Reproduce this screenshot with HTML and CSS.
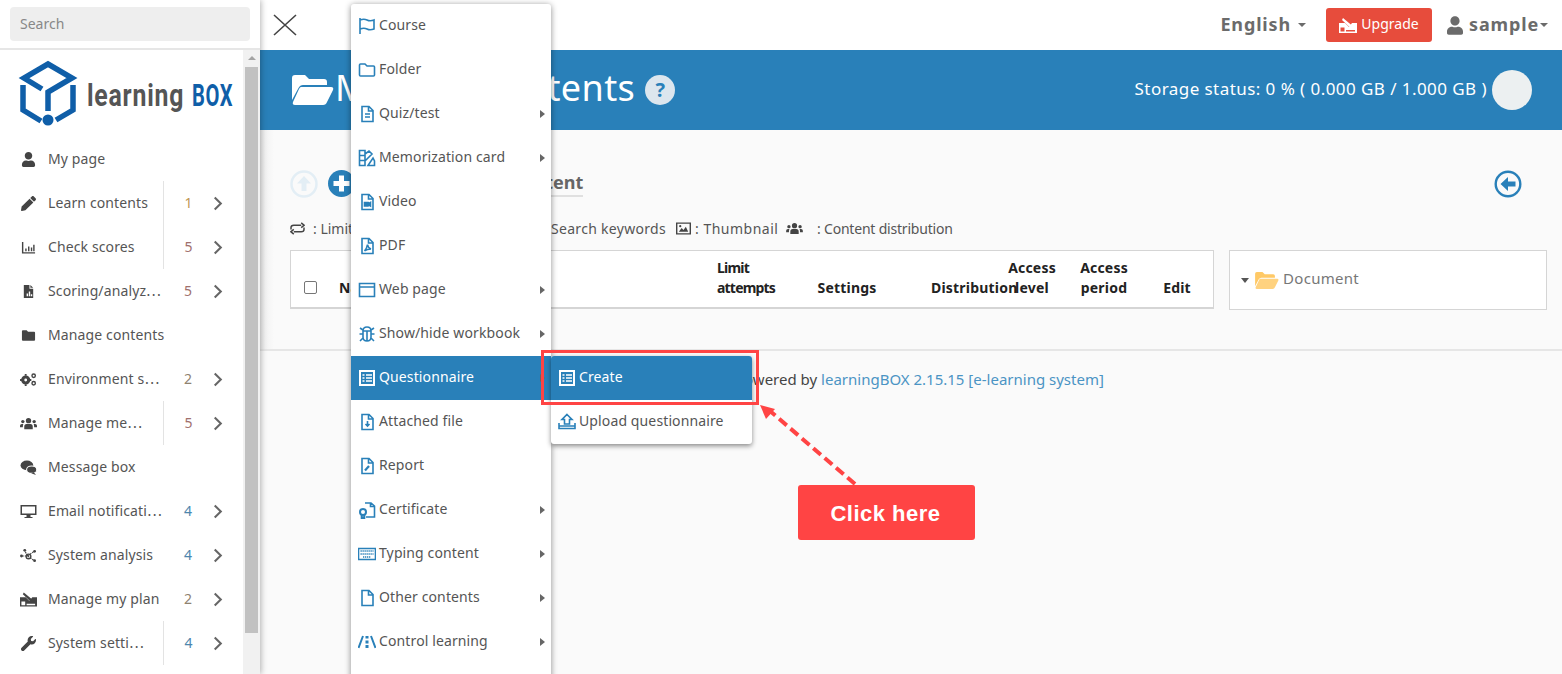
FILE: index.html
```html
<!DOCTYPE html>
<html lang="en">

<head>
    <meta charset="UTF-8">
    <meta name="viewport" content="width=device-width, initial-scale=1.0">
    <title>learningBOX</title>
    <link rel="stylesheet" href="styles.css">
</head>

<body>
    <div class="page">
        <!-- sidebar -->
        <div class="sidebar">
            <div class="searchBar"><div class="searchBox">Search</div></div>
            <div class="sideScroll">
                <div class="sideBody">
                    <div class="logo">
                        <svg width="220" height="70" viewBox="15 60 220 70">
                            <g fill="none" stroke="#0f5ea8" stroke-width="5.500">
                                <path d="M42 89 L24 78 L48 64 L72 78 L48 92 V111"/>
                                <path d="M23 85 V110 L41 121"/>
                                <path d="M73 85 V110 L56 120"/>
                            </g>
                            <circle cx="48" cy="120" r="5.500" fill="#0f5ea8"/>
                            <text transform="translate(87 106) scale(.8 1)" class="logoText" fill="#555">learning</text>
                            <text transform="translate(192 106) scale(.65 1)" class="logoText" fill="#0f5ea8">BOX</text>
                        </svg>
                    </div>
                    <div class="navItem">
                        <svg class="navIcon" viewBox="0 0 448 512"><path d="M224 256c70.700 0 128-57.300 128-128S294.700 0 224 0 96 57.300 96 128s57.300 128 128 128zm89.600 32h-16.700c-22.200 10.200-46.900 16-72.900 16s-50.600-5.800-72.900-16h-16.700C60.200 288 0 348.200 0 422.400V464c0 26.500 21.500 48 48 48h352c26.500 0 48-21.500 48-48v-41.600c0-74.200-60.200-134.400-134.400-134.400z"/></svg>
                        <span class="navLabel">My page</span>
                    </div>
                    <div class="navItem">
                        <svg class="navIcon" viewBox="0 0 512 512"><path d="M497.900 142.100l-46.100 46.100c-4.700 4.700-12.300 4.700-17 0l-111-111c-4.700-4.700-4.700-12.300 0-17l46.100-46.100c18.700-18.700 49.100-18.700 67.900 0l60.100 60.100c18.800 18.700 18.800 49.100 0 67.900zM284.200 99.800L21.600 362.400.4 483.900c-2.900 16.400 11.400 30.600 27.800 27.800l121.500-21.300 262.600-262.600c4.700-4.700 4.700-12.300 0-17l-111-111c-4.800-4.700-12.400-4.700-17.100 0z"/></svg>
                        <span class="navLabel">Learn contents</span>
                        <span class="navNum sep tan">1</span>
                        <svg class="chev" viewBox="0 0 10 16"><path d="M1.500 1.500 L8 8 L1.500 14.500"/></svg>
                    </div>
                    <div class="navItem">
                        <svg class="navIcon" viewBox="0 0 16 16"><path d="M1 2h1.500v11H15v1.500H1zM4.500 9h1.500v3H4.500zM7.500 7h1.500v5H7.500zM10.500 8h1.500v4h-1.500zM13 5h1.500v7H13z"/></svg>
                        <span class="navLabel">Check scores</span>
                        <span class="navNum sep red">5</span>
                        <svg class="chev" viewBox="0 0 10 16"><path d="M1.500 1.500 L8 8 L1.500 14.500"/></svg>
                    </div>
                    <div class="navItem">
                        <svg class="navIcon" viewBox="0 0 16 16"><path d="M3 1h6v4h4v10H3zM10 1l3 3h-3z M6 13h1.500v-3H6z M8.300 13h1.500V8H8.300z M10.500 13H12v-2h-1.500z" fill-rule="evenodd"/></svg>
                        <span class="navLabel">Scoring/analyz⋯</span>
                        <span class="navNum red">5</span>
                        <svg class="chev" viewBox="0 0 10 16"><path d="M1.500 1.500 L8 8 L1.500 14.500"/></svg>
                    </div>
                    <div class="navItem">
                        <svg class="navIcon" viewBox="0 0 16 16"><path d="M1 3.500 Q1 2.500 2 2.500 H6 L7.500 4 H14 Q15 4 15 5 V12.500 Q15 13.500 14 13.500 H2 Q1 13.500 1 12.500z"/></svg>
                        <span class="navLabel">Manage contents</span>
                    </div>
                    <div class="navItem">
                        <svg class="navIcon" viewBox="0 0 18 16"><circle cx="6" cy="8.500" r="3.200" fill="none" stroke="#444" stroke-width="3.400"/><path d="M5 2h2v2H5zM5 13h2v2H5zM0 7.500h2v2H0zM10 7.500h2v2h-2z"/><circle cx="14.500" cy="4" r="1.800" fill="none" stroke="#444" stroke-width="1.500"/><circle cx="14.500" cy="12" r="1.800" fill="none" stroke="#444" stroke-width="1.500"/></svg>
                        <span class="navLabel">Environment s⋯</span>
                        <span class="navNum brown">2</span>
                        <svg class="chev" viewBox="0 0 10 16"><path d="M1.500 1.500 L8 8 L1.500 14.500"/></svg>
                    </div>
                    <div class="navItem">
                        <svg class="navIcon" viewBox="0 0 18 14"><circle cx="9" cy="4" r="2.800"/><circle cx="3" cy="5" r="1.800"/><circle cx="15" cy="5" r="1.800"/><path d="M4.500 13 V10.500 Q4.500 7.500 7 7.500 H11 Q13.500 7.500 13.500 10.500 V13z M0 11 V9.500 Q0 7.500 2 7.500 H3.500 Q3 9 3 11z M18 11 V9.500 Q18 7.500 16 7.500 H14.500 Q15 9 15 11z"/></svg>
                        <span class="navLabel">Manage me⋯</span>
                        <span class="navNum sep red">5</span>
                        <svg class="chev" viewBox="0 0 10 16"><path d="M1.500 1.500 L8 8 L1.500 14.500"/></svg>
                    </div>
                    <div class="navItem">
                        <svg class="navIcon" viewBox="0 0 16 14"><ellipse cx="6.500" cy="5" rx="6" ry="4.500"/><ellipse cx="11" cy="9" rx="4.800" ry="3.500" stroke="#fff"/><path d="M13 11.500 L15 14 L10.500 12.500z"/></svg>
                        <span class="navLabel">Message box</span>
                    </div>
                    <div class="navItem">
                        <svg class="navIcon" viewBox="0 0 16 15"><path d="M0 1h16v10H10v2h2v1H4v-1h2v-2H0zM1.500 2.500v7h13v-7z" fill-rule="evenodd"/></svg>
                        <span class="navLabel">Email notificati⋯</span>
                        <span class="navNum blue">4</span>
                        <svg class="chev" viewBox="0 0 10 16"><path d="M1.500 1.500 L8 8 L1.500 14.500"/></svg>
                    </div>
                    <div class="navItem">
                        <svg class="navIcon" viewBox="0 0 18 16"><path d="M2 8.500 H7 M8 8.500 L5 3 M8 8.500 L15 3.500 M8 8.500 L15 13.500" stroke="#444" stroke-width="1.200" stroke-dasharray="2 1"/><circle cx="1.500" cy="8.500" r="1.500"/><circle cx="5" cy="2.500" r="1.500"/><circle cx="9" cy="9" r="2.500" fill="none" stroke="#444" stroke-width="1.500"/><circle cx="15.500" cy="3.500" r="1.500"/><circle cx="15.500" cy="13.500" r="1.500"/></svg>
                        <span class="navLabel">System analysis</span>
                        <span class="navNum blue">4</span>
                        <svg class="chev" viewBox="0 0 10 16"><path d="M1.500 1.500 L8 8 L1.500 14.500"/></svg>
                    </div>
                    <div class="navItem">
                        <svg class="navIcon" viewBox="0 0 18 15"><path d="M0 5h6l4 4 3-4h5v10H0zM1.500 9.500v4h4v-4zM7 12v1.500h9V12z" fill-rule="evenodd"/><path d="M4 0 L13 7.500 L10.500 9 L3 2z"/></svg>
                        <span class="navLabel">Manage my plan</span>
                        <span class="navNum brown">2</span>
                        <svg class="chev" viewBox="0 0 10 16"><path d="M1.500 1.500 L8 8 L1.500 14.500"/></svg>
                    </div>
                    <div class="navItem">
                        <svg class="navIcon" viewBox="0 0 512 512"><path d="M507.700 109.100c-2.200-9-13.500-12.100-20.100-5.500l-74.400 74.400-67.900-11.300-11.300-67.900 74.400-74.400c6.600-6.600 3.400-17.900-5.700-20.200-47.400-11.700-99.500.9-136.400 37.900-39.500 39.500-50.500 97-34.100 147.100L18.700 402.800c-25 25-25 65.500 0 90.500 25 25 65.500 25 90.500 0l213.200-213.200c50.100 16.700 107.500 5.700 147.400-34.200 37.100-37.100 49.700-89.300 37.900-136.800z"/></svg>
                        <span class="navLabel">System setti⋯</span>
                        <span class="navNum sep blue">4</span>
                        <svg class="chev" viewBox="0 0 10 16"><path d="M1.500 1.500 L8 8 L1.500 14.500"/></svg>
                    </div>
                </div>
                <div class="scrollTrack">
                    <div class="scrollUp"></div>
                    <div class="scrollThumb"></div>
                </div>
            </div>
        </div>

        <!-- main column -->
        <div class="main">
            <div class="topBar">
                <svg class="closeIcon" viewBox="0 0 24 22"><path d="M1 1 L23 21 M23 1 L1 21"/></svg>
                <div class="topRight">
                    <span class="topLink">English</span><span class="caret lang"></span>
                    <div class="upgradeBtn">
                        <svg width="18" height="15" viewBox="0 0 18 15"><path d="M0 5h6l4 4 3-4h5v10H0zM1.500 9.500v4h4v-4zM7 12v1.500h9V12z" fill="#fff" fill-rule="evenodd"/><path d="M4 0 L13 7.500 L10.500 9 L3 2z" fill="#fff"/></svg>
                        <span class="btnText">Upgrade</span>
                    </div>
                    <svg class="userIcon" viewBox="0 0 448 512"><path d="M224 256c70.700 0 128-57.300 128-128S294.700 0 224 0 96 57.300 96 128s57.300 128 128 128zm89.600 32h-16.700c-22.200 10.200-46.900 16-72.900 16s-50.600-5.800-72.900-16h-16.700C60.200 288 0 348.200 0 422.400V464c0 26.500 21.500 48 48 48h352c26.500 0 48-21.500 48-48v-41.600c0-74.200-60.200-134.400-134.400-134.400z"/></svg>
                    <span class="topLink">sample</span><span class="caret"></span>
                </div>
            </div>

            <div class="titleBar">
                <svg class="titleFolder" viewBox="0 0 42 30"><path d="M0 3 Q0 0 3 0 H13 L17 4 H32 Q35 4 35 7 V10 H11 Q8 10 6.500 13 L0 25z"/><path d="M9 12 H39 Q42 12 41 15 L35 27 Q34 30 31 30 H3 Q0 30 1 27 L7 14 Q8 12 9 12z"/></svg>
                <h1>Manage contents</h1>
                <span class="helpBadge">?</span>
                <span class="storage">Storage status: 0 % ( 0.000 GB / 1.000 GB )</span>
                <span class="storageCircle"></span>
            </div>

            <div class="content">
                <div class="toolRow">
                    <svg class="upBtn" viewBox="0 0 28 28"><circle cx="14" cy="14" r="12.500" fill="none" stroke="#e3eef5" stroke-width="2.500"/><path d="M14 6 L21 13.500 H16.500 V21 H11.500 V13.500 H7z" fill="#e3eef5"/></svg>
                    <svg class="plusBtn" viewBox="0 0 27 27"><circle cx="13.500" cy="13.500" r="13.500" fill="#2980b9"/><path d="M11 5.500h5V11h5.500v5H16v5.500h-5V16H5.500v-5H11z" fill="#fff"/></svg>
                    <span class="addTab">Add content</span>
                    <svg class="backBtn" viewBox="0 0 28 28"><circle cx="14" cy="14" r="12.300" fill="none" stroke="#2980b9" stroke-width="2.400"/><path d="M6.500 14 L14 7 V11.500 H21.500 V16.500 H14 V21z" fill="#2980b9"/></svg>
                </div>

                <div class="legend">
                    <svg class="legIcon" viewBox="0 0 16 14"><path d="M1 8 V6 Q1 3.500 4 3.500 H12 M12 1 L15 3.500 L12 6 M15 6 V8 Q15 10.500 12 10.500 H4 M4 8 L1 10.500 L4 13" fill="none" stroke="#444" stroke-width="1.600"/></svg>
                    <span class="legFirst">: Limit attempts</span>
                    <span class="legSecond">: Settings</span>
                    <span class="legThird">: Search keywords</span>
                    <svg class="legIcon thumb" viewBox="0 0 16 13"><path d="M0 0h16v13H0zM1.500 1.500v10h13v-10z" fill="#444" fill-rule="evenodd"/><path d="M3 10 L6 6 L8 8 L10.500 4.500 L13 10z" fill="#444"/><circle cx="4.500" cy="4" r="1.200" fill="#444"/></svg>
                    <span class="legThumb">: Thumbnail</span>
                    <svg class="legIcon people" viewBox="0 0 18 14" fill="#444"><circle cx="9" cy="4" r="2.800"/><circle cx="3" cy="5" r="1.800"/><circle cx="15" cy="5" r="1.800"/><path d="M4.500 13 V10.500 Q4.500 7.500 7 7.500 H11 Q13.500 7.500 13.500 10.500 V13z M0 11 V9.500 Q0 7.500 2 7.500 H3.500 Q3 9 3 11z M18 11 V9.500 Q18 7.500 16 7.500 H14.500 Q15 9 15 11z"/></svg>
                    <span class="legLast">: Content distribution</span>
                </div>

                <div class="tableRow">
                    <div class="listHead">
                        <span class="checkBox"></span>
                        <span class="colName">Name</span>
                        <span class="colLimit">Limit<br>attempts</span>
                        <span class="colSettings">Settings</span>
                        <span class="colDist">Distribution</span>
                        <span class="colLevel">Access<br>level</span>
                        <span class="colPeriod">Access<br>period</span>
                        <span class="colEdit">Edit</span>
                    </div>
                    <div class="treePanel">
                        <span class="treeCaret"></span>
                        <svg class="treeFolder" viewBox="0 0 42 30"><path d="M0 3 Q0 0 3 0 H13 L17 4 H32 Q35 4 35 7 V10 H11 Q8 10 6.500 13 L0 25z" fill="#ffc966"/><path d="M9 12 H39 Q42 12 41 15 L35 27 Q34 30 31 30 H3 Q0 30 1 27 L7 14 Q8 12 9 12z" fill="#ffd27f"/></svg>
                        <span class="treeText">Document</span>
                    </div>
                </div>
            </div>

            <div class="footer">Powered by <span class="footLink">learningBOX 2.15.15 [e-learning system]</span></div>
        </div>
    </div>

    <!-- dropdown menu -->
    <div class="menu">
        <div class="menuItem">
            <svg class="menuIcon" viewBox="0 0 18 18"><path d="M2 1 V17 M2 3 Q6 1.500 9 3 T16 3 V12 Q12 13.500 9 12 T2 12"/></svg>
            <span>Course</span>
        </div>
        <div class="menuItem">
            <svg class="menuIcon" viewBox="0 0 18 18"><path d="M1.500 4 Q1.500 3 2.500 3 H7 L9 5 H15.500 Q16.500 5 16.500 6 V14 Q16.500 15 15.500 15 H2.500 Q1.500 15 1.500 14z"/></svg>
            <span>Folder</span>
        </div>
        <div class="menuItem more">
            <svg class="menuIcon" viewBox="0 0 18 18"><path d="M4 1.500 H11 L15 5.500 V16.500 H4z M7 9 H12 M7 12 H12 M10.500 1.500 V6 H15"/></svg>
            <span>Quiz/test</span>
        </div>
        <div class="menuItem more">
            <svg class="menuIcon" viewBox="0 0 18 18"><path d="M1.500 1.500 H7 V16.500 H1.500z M1.500 6.500 H7 M1.500 11.500 H7 M7 5 L11 2 L14 5 L7 12 M10 16.500 L15 9 L16.500 12 V16.500z"/></svg>
            <span>Memorization card</span>
        </div>
        <div class="menuItem">
            <svg class="menuIcon" viewBox="0 0 18 18"><path d="M4 1.500 H11 L15 5.500 V16.500 H4z M10.500 1.500 V6 H15"/><path d="M6.500 9.500 H10 V13 H6.500z M10 11 L12.500 9.500 V13 L10 11.500z" fill="#2980b9"/></svg>
            <span>Video</span>
        </div>
        <div class="menuItem">
            <svg class="menuIcon" viewBox="0 0 18 18"><path d="M4 1.500 H11 L15 5.500 V16.500 H4z M10.500 1.500 V6 H15 M6.500 14 Q9 11 9.500 7.500 Q10 11 13 12 Q9 12 6.500 14z"/></svg>
            <span>PDF</span>
        </div>
        <div class="menuItem more">
            <svg class="menuIcon" viewBox="0 0 18 18"><path d="M1.500 2.500 H16.500 V15.500 H1.500z M1.500 6 H16.500"/></svg>
            <span>Web page</span>
        </div>
        <div class="menuItem more">
            <svg class="menuIcon" viewBox="0 0 18 18"><path d="M5 6 Q5 2 9 2 Q13 2 13 6 V12 Q13 16 9 16 Q5 16 5 12z M5 6 H13 M9 6 V16 M5 9 H1.500 M13 9 H16.500 M5 5 L2 3 M13 5 L16 3 M5 13 L2 16 M13 13 L16 16"/></svg>
            <span>Show/hide workbook</span>
        </div>
        <div class="menuItem active more">
            <svg class="menuIcon" viewBox="0 0 18 18"><path d="M2 2 H16 V16 H2z" stroke-width="2"/><path d="M8 6 H14 M8 9 H14 M8 12 H14 M4.500 6 H6.500 M4.500 9 H6.500 M4.500 12 H6.500"/></svg>
            <span>Questionnaire</span>
        </div>
        <div class="menuItem">
            <svg class="menuIcon" viewBox="0 0 18 18"><path d="M4 1.500 H11 L15 5.500 V16.500 H4z M10.500 1.500 V6 H15 M9.500 8 V13 M7.500 11 L9.500 13 L11.500 11"/></svg>
            <span>Attached file</span>
        </div>
        <div class="menuItem">
            <svg class="menuIcon" viewBox="0 0 18 18"><path d="M4 1.500 H11 L15 5.500 V16.500 H4z M10.500 1.500 V6 H15"/><path d="M7 13.500 L11 9" stroke-width="2.200"/></svg>
            <span>Report</span>
        </div>
        <div class="menuItem more">
            <svg class="menuIcon" viewBox="0 0 18 18"><path d="M7 2 H13 L16.500 5 V16 H8 M12.500 2 V5.500 H16.500"/><circle cx="5" cy="11" r="3" stroke-width="2"/><path d="M3.500 14 V17 L5 16 L6.500 17 V14"/></svg>
            <span>Certificate</span>
        </div>
        <div class="menuItem more">
            <svg class="menuIcon wide" viewBox="0 0 18 14"><path d="M.5 1.500 H17.500 V12.500 H.5z"/><path d="M2.500 4 H15.500 M2.500 7 H15.500 M5 10 H13" stroke-dasharray="1.300 .7" stroke-width="1.400"/></svg>
            <span>Typing content</span>
        </div>
        <div class="menuItem more">
            <svg class="menuIcon" viewBox="0 0 18 18"><path d="M4 1.500 H11 L15 5.500 V16.500 H4z M10.500 1.500 V6 H15"/></svg>
            <span>Other contents</span>
        </div>
        <div class="menuItem more">
            <svg class="menuIcon wide" viewBox="0 0 18 14"><path d="M5 1 L.5 13 M13 1 L17.500 13" stroke-width="2"/><path d="M9 1 V3.500 M9 5.500 V8.500 M9 10 V13" stroke-width="3"/></svg>
            <span>Control learning</span>
        </div>
    </div>

    <div class="submenu">
        <div class="menuItem active">
            <svg class="menuIcon" viewBox="0 0 18 18"><path d="M2 2 H16 V16 H2z" stroke-width="2"/><path d="M8 6 H14 M8 9 H14 M8 12 H14 M4.500 6 H6.500 M4.500 9 H6.500 M4.500 12 H6.500"/></svg>
            <span>Create</span>
        </div>
        <div class="menuItem">
            <svg class="menuIcon" viewBox="0 0 18 18"><path d="M9 1.500 L14 6.500 H11.500 V11 H6.500 V6.500 H4z M1 10 V15.500 H17 V10 M1 13 H17"/></svg>
            <span>Upload questionnaire</span>
        </div>
    </div>

    <!-- tutorial marks drawn over the screenshot -->
    <div class="redBox"></div>
    <svg class="redArrow" width="110" height="95" viewBox="0 0 110 95">
        <path d="M98 82 L13 9" fill="none" stroke="#ff4444" stroke-width="4" stroke-dasharray="10 5"/>
        <path d="M3 3 L18 7 L9 17z" fill="#ff4444"/>
    </svg>
    <div class="callout">Click here</div>
</body>

</html>
```
FILE: styles.css
```css
* {
    box-sizing: border-box;
}

html,
body {
    height: 100%;
    overflow: hidden;
}

body {
    margin: 0;
    font-family: "Noto Sans", "Noto Sans CJK JP", sans-serif;
    font-size: 14px;
    color: #555;
    background-color: #fafafa;
}

h1 {
    margin: 0 0 4px;
    font-size: 36px;
    font-weight: 400;
    line-height: 1;
    letter-spacing: .4px;
}

.page {
    display: flex;
    height: 674px;
}

/* sidebar */
.sidebar {
    width: 260px;
    flex-shrink: 0;
    background-color: #fff;
    box-shadow: 1px 0 6px rgba(0, 0, 0, .3);
    position: relative;
    z-index: 2;
    display: flex;
    flex-direction: column;
}

.searchBar {
    height: 50px;
    padding: 7px 10px 8px;
    border-bottom: 2px solid #e6e6e6;
}

.searchBox {
    height: 34px;
    line-height: 34px;
    padding-left: 10px;
    background-color: #eee;
    border-radius: 4px;
    color: #888;
}

.sideScroll {
    flex: 1;
    display: flex;
    min-height: 0;
}

.sideBody {
    width: 243px;
    flex-shrink: 0;
}

.logo {
    height: 87px;
    padding: 10px 0 0 15px;
}

.logo svg {
    display: block;
}

.logoText {
    font-family: Roboto, sans-serif;
    font-size: 31px;
    font-weight: 700;
    letter-spacing: 1px;
}

.navItem {
    height: 44px;
    display: flex;
    align-items: center;
    padding-left: 20px;
}

.navIcon {
    width: 17px;
    height: 15px;
    fill: #444;
    flex-shrink: 0;
    margin-right: 11px;
}

.navLabel {
    width: 115px;
    flex-shrink: 0;
    margin-bottom: 2px;
    white-space: nowrap;
    letter-spacing: .12px;
}

.navNum {
    width: 50px;
    height: 44px;
    line-height: 44px;
    text-align: center;
    flex-shrink: 0;
}

.navNum.sep {
    border-left: 1px solid #e3e3e3;
}

.tan {
    color: #c09853;
}

.red {
    color: #a0706d;
}

.brown {
    color: #8f8270;
}

.blue {
    color: #4d86ad;
}

.chev {
    width: 10px;
    height: 15px;
    fill: none;
    stroke: #666;
    stroke-width: 2.200;
    flex-shrink: 0;
}

.scrollTrack {
    width: 17px;
    height: 100%;
    background-color: #f1f1f1;
    padding: 17px 2px 0;
    position: relative;
}

.scrollUp {
    position: absolute;
    top: 6px;
    left: 5px;
    border-left: 4px solid transparent;
    border-right: 4px solid transparent;
    border-bottom: 4px solid #a3a3a3;
}

.scrollThumb {
    height: 566px;
    background-color: #c1c1c1;
}

/* main column */
.main {
    flex: 1;
    min-width: 0;
    display: flex;
    flex-direction: column;
}

.topBar {
    height: 50px;
    background-color: #fff;
    display: flex;
    align-items: center;
    justify-content: space-between;
    padding: 0 14px 0 13px;
}

.closeIcon {
    width: 24px;
    height: 22px;
    fill: none;
    stroke: #444;
    stroke-width: 1.600;
}

.topRight {
    display: flex;
    align-items: center;
}

.topLink {
    margin-bottom: 3px;
    font-size: 18px;
    font-weight: 700;
    letter-spacing: .85px;
    color: #6b6b6b;
}

.caret {
    width: 0;
    height: 0;
    margin-left: 1px;
    border-left: 4px solid transparent;
    border-right: 4px solid transparent;
    border-top: 4px solid #6b6b6b;
}

.caret.lang {
    margin-left: 7px;
}

.upgradeBtn {
    width: 106px;
    height: 34px;
    margin: 0 15px 0 20px;
    background-color: #e74c3c;
    border-radius: 3px;
    color: #fff;
    display: flex;
    align-items: center;
    justify-content: center;
    gap: 4px;
}

.btnText {
    margin-bottom: 3px;
}

.userIcon {
    width: 16px;
    height: 19px;
    fill: #6b6b6b;
    margin-right: 6px;
}

.titleBar {
    height: 80px;
    background-color: #2980b9;
    color: #fff;
    display: flex;
    align-items: center;
    padding: 0 30px 0 32px;
}

.titleFolder {
    width: 42px;
    height: 30px;
    fill: #fff;
    margin-right: 1px;
}

.helpBadge {
    width: 30px;
    height: 30px;
    margin-left: 10px;
    border-radius: 50%;
    background-color: #dce6ee;
    color: #2980b9;
    font-size: 20px;
    font-weight: 700;
    line-height: 30px;
    text-align: center;
}

.storage {
    margin-left: auto;
    margin-bottom: 4px;
    font-size: 17px;
    letter-spacing: .44px;
}

.storageCircle {
    width: 40px;
    height: 40px;
    margin-left: 5px;
    border-radius: 50%;
    background-color: #ecf0f1;
}

.content {
    height: 221px;
    padding: 40px 15px 0 30px;
    border-bottom: 2px solid #e6e6e6;
    background: linear-gradient(to right, #eee, #fafafa 14px);
}

.toolRow {
    height: 27px;
    display: flex;
    align-items: center;
}

.upBtn {
    width: 28px;
    height: 28px;
}

.plusBtn {
    width: 27px;
    height: 27px;
    margin-left: 10px;
}

.addTab {
    margin-left: 118px;
    font-size: 18px;
    font-weight: 700;
    color: #666;
    border-bottom: 2px solid #e0e0e0;
    line-height: 25px;
}

.backBtn {
    width: 28px;
    height: 28px;
    margin-left: auto;
    margin-right: 25px;
}

.legend {
    height: 20px;
    margin-top: 21px;
    margin-bottom: 12px;
    display: flex;
    align-items: center;
    white-space: nowrap;
}

.legIcon {
    width: 15px;
    height: 13px;
    margin-right: 8px;
}

.legFirst {
    width: 118px;
}

.legSecond {
    width: 112px;
}

.legThird {
    width: 133px;
    letter-spacing: .3px;
}

.legIcon.thumb {
    margin-right: 4px;
}

.legThumb {
    width: 84px;
    letter-spacing: .5px;
}

.legIcon.people {
    width: 19px;
    margin-left: 6px;
    margin-right: 13px;
}

.legLast {
    letter-spacing: -.2px;
}

.tableRow {
    display: flex;
    gap: 15px;
}

.listHead {
    width: 924px;
    height: 59px;
    background-color: #fff;
    border: 1px solid #d5d5d5;
    border-bottom-width: 2px;
    position: relative;
    color: #222;
    font-weight: 700;
    line-height: 20px;
    letter-spacing: .2px;
    display: flex;
    align-items: flex-end;
    padding-bottom: 9px;
}

.checkBox {
    width: 13px;
    height: 13px;
    margin: 0 0 4px 13px;
    border: 1px solid #767676;
    border-radius: 2px;
    background-color: #fff;
}

.colName {
    margin-left: 22px;
    width: 378px;
}

.colLevel,
.colPeriod,
.colEdit,
.colSettings {
    text-align: center;
}

.colLimit {
    width: 68px;
    letter-spacing: -.8px;
}

.colSettings {
    width: 60px;
    margin-left: 32px;
}

.colDist {
    margin-left: 54px;
    width: 76px;
    white-space: nowrap;
}

.colLevel {
    width: 50px;
}

.colPeriod {
    width: 50px;
    margin-left: 22px;
}

.colEdit {
    width: 30px;
    margin-left: 33px;
}

.treePanel {
    width: 318px;
    height: 60px;
    background-color: #fff;
    border: 1px solid #d5d5d5;
    display: flex;
    align-items: center;
    padding-left: 11px;
    color: #777;
}

.treeCaret {
    width: 0;
    height: 0;
    border-left: 4px solid transparent;
    border-right: 4px solid transparent;
    border-top: 5px solid #555;
    margin-right: 6px;
}

.treeFolder {
    width: 24px;
    height: 17px;
    margin-right: 4px;
}

.treeText {
    margin-bottom: 4px;
    font-size: 15px;
    letter-spacing: .3px;
}

.footer {
    padding: 18px 0 0 475px;
    font-size: 15px;
    color: #444;
}

.footLink {
    color: #4b94c4;
}

/* dropdown menu, over the page */
.menu {
    position: absolute;
    top: 4px;
    left: 351px;
    z-index: 5;
    width: 200px;
    padding-bottom: 20px;
    background-color: #fff;
    border-radius: 3px;
    box-shadow: 0 1px 6px rgba(0, 0, 0, .45);
}

.submenu {
    position: absolute;
    top: 356px;
    left: 551px;
    z-index: 6;
    width: 201px;
    background-color: #fff;
    border-radius: 3px;
    box-shadow: 0 2px 5px rgba(0, 0, 0, .45);
    overflow: hidden;
}

.menuItem {
    height: 44px;
    display: flex;
    align-items: center;
    padding-left: 7px;
    color: #555;
    letter-spacing: .12px;
    white-space: nowrap;
    position: relative;
}

.menuItem span {
    margin-bottom: 4px;
}

.menuIcon {
    width: 18px;
    height: 18px;
    margin-right: 3px;
    fill: none;
    stroke: #2980b9;
    stroke-width: 1.600;
    flex-shrink: 0;
}

.menuIcon.wide {
    height: 14px;
}

.menuItem.more::after {
    content: "";
    position: absolute;
    right: 6px;
    top: 18px;
    border-top: 4px solid transparent;
    border-bottom: 4px solid transparent;
    border-left: 5px solid #666;
}

.menuItem.active {
    background-color: #2980b9;
    color: #fff;
}

.menuItem.active .menuIcon {
    stroke: #fff;
}

/* tutorial marks */
.redBox {
    position: absolute;
    top: 350px;
    left: 541px;
    z-index: 7;
    width: 218px;
    height: 55px;
    border: 3px solid #ff4444;
}

.redArrow {
    position: absolute;
    top: 402px;
    left: 757px;
    z-index: 7;
}

.callout {
    position: absolute;
    top: 485px;
    left: 798px;
    z-index: 8;
    width: 177px;
    height: 55px;
    padding-right: 2px;
    background-color: #ff4444;
    border-radius: 3px;
    color: #fff;
    font-family: "Liberation Sans", sans-serif;
    font-size: 22px;
    font-weight: 700;
    letter-spacing: .5px;
    line-height: 57px;
    text-align: center;
}
```
